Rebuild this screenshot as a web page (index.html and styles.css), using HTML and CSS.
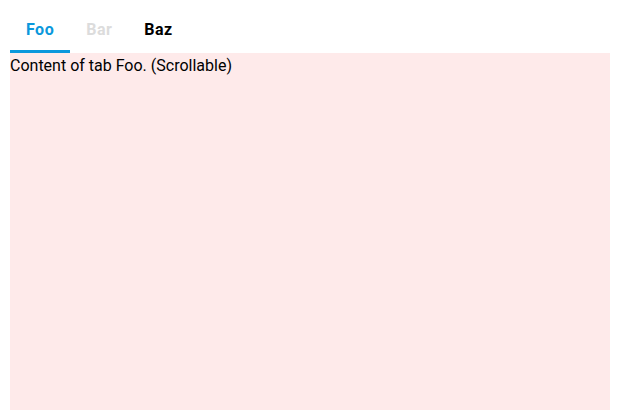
FILE: index.html
```html
<!DOCTYPE html>
<html>
<head>
<meta charset="utf-8">
<link rel="stylesheet" href="styles.css">
</head>
<body>
<div class="tabs">
  <div class="tabbar">
    <div class="tab active">Foo</div>
    <div class="tab disabled">Bar</div>
    <div class="tab">Baz</div>
  </div>
  <div class="panel">Content of tab Foo. (Scrollable)</div>
</div>
</body>
</html>
```
FILE: styles.css
```css
html, body { margin: 0; padding: 0; background: #fff; }
body { padding: 10px; font-family: Roboto, "Liberation Sans", sans-serif; }
.tabs { display: flex; flex-direction: column; height: 400px; }
.tabbar { display: flex; height: 43px; }
.tab {
  padding: 0 16px 1px;
  font-size: 16px;
  font-weight: 700;
  letter-spacing: 0.5px;
  line-height: 39px;
  border-bottom: 3px solid transparent;
  color: #000;
}
.tab.active { color: #0b98dc; border-bottom-color: #0b98dc; }
.tab.disabled { color: #dcdcdc; }
.panel {
  flex: 1;
  padding-top: 1px;
  background: #feeaea;
  font-size: 16px;
  line-height: 24px;
  color: #000;
  overflow: auto;
}
```
